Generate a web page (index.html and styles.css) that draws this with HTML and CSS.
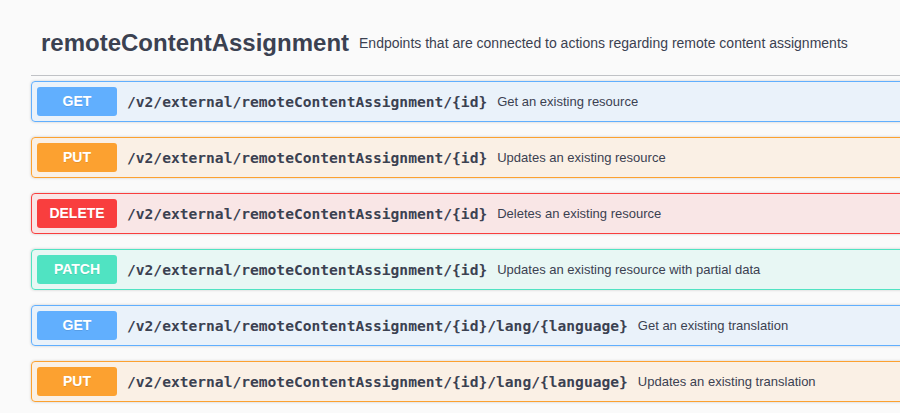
FILE: index.html
```html
<!DOCTYPE html>
<html lang="en">
<head>
    <meta charset="UTF-8">
    <meta name="viewport" content="width=device-width, initial-scale=1.0">
    <title>remoteContentAssignment</title>
    <link rel="stylesheet" href="styles.css">
</head>
<body>
    <div class="wrapper">
        <div class="tag-section">
            <h4 class="opblock-tag">
                <span class="tag-name">remoteContentAssignment</span>
                <small class="tag-desc">Endpoints that are connected to actions regarding remote content assignments</small>
            </h4>

            <!-- Operations -->
            <div class="opblock opblock-get">
                <span class="method">GET</span>
                <span class="path">/v2/external/remoteContentAssignment/{id}</span>
                <span class="desc">Get an existing resource</span>
            </div>

            <div class="opblock opblock-put">
                <span class="method">PUT</span>
                <span class="path">/v2/external/remoteContentAssignment/{id}</span>
                <span class="desc">Updates an existing resource</span>
            </div>

            <div class="opblock opblock-delete">
                <span class="method">DELETE</span>
                <span class="path">/v2/external/remoteContentAssignment/{id}</span>
                <span class="desc">Deletes an existing resource</span>
            </div>

            <div class="opblock opblock-patch">
                <span class="method">PATCH</span>
                <span class="path">/v2/external/remoteContentAssignment/{id}</span>
                <span class="desc">Updates an existing resource with partial data</span>
            </div>

            <div class="opblock opblock-get">
                <span class="method">GET</span>
                <span class="path">/v2/external/remoteContentAssignment/{id}/lang/{language}</span>
                <span class="desc">Get an existing translation</span>
            </div>

            <div class="opblock opblock-put">
                <span class="method">PUT</span>
                <span class="path">/v2/external/remoteContentAssignment/{id}/lang/{language}</span>
                <span class="desc">Updates an existing translation</span>
            </div>
        </div>
    </div>
</body>
</html>
```

FILE: styles.css
```css
html, body {
    margin: 0;
    padding: 0;
    background-color: #fafafa;
    font-family: "Liberation Sans", Arial, sans-serif;
    color: #3b4151;
    overflow: hidden;
}

.wrapper {
    padding: 19px 0 0 31px;
    width: 900px;
}

.opblock-tag {
    display: flex;
    align-items: center;
    margin: 0 0 5px;
    padding: 10px 20px 18px 10px;
    font-size: 24px;
    font-weight: bold;
    border-bottom: 1px solid rgba(59, 65, 81, 0.3);
}

.tag-desc {
    font-size: 14px;
    font-weight: normal;
    padding: 0 10px;
}

.opblock {
    display: flex;
    align-items: center;
    padding: 5px;
    margin-bottom: 15px;
    border: 1px solid;
    border-radius: 4px;
    box-shadow: 0 0 3px rgba(0, 0, 0, 0.19);
}

.method {
    min-width: 80px;
    padding: 6px 0;
    font-size: 14px;
    line-height: 17px;
    font-weight: bold;
    text-align: center;
    color: #fff;
    border-radius: 3px;
    text-shadow: 0 1px 0 rgba(0, 0, 0, 0.1);
}

.path {
    padding: 0 10px;
    font-family: "DejaVu Sans Mono", monospace;
    font-size: 14.6px;
    font-weight: bold;
    color: #3b4151;
}

.desc {
    font-size: 13px;
}

.opblock-get {
    background-color: rgba(97, 175, 254, 0.1);
    border-color: #61affe;
}

.opblock-get .method {
    background-color: #61affe;
}

.opblock-put {
    background-color: rgba(252, 161, 48, 0.1);
    border-color: #fca130;
}

.opblock-put .method {
    background-color: #fca130;
}

.opblock-delete {
    background-color: rgba(249, 62, 62, 0.1);
    border-color: #f93e3e;
}

.opblock-delete .method {
    background-color: #f93e3e;
}

.opblock-patch {
    background-color: rgba(80, 227, 194, 0.1);
    border-color: #50e3c2;
}

.opblock-patch .method {
    background-color: #50e3c2;
}
```
